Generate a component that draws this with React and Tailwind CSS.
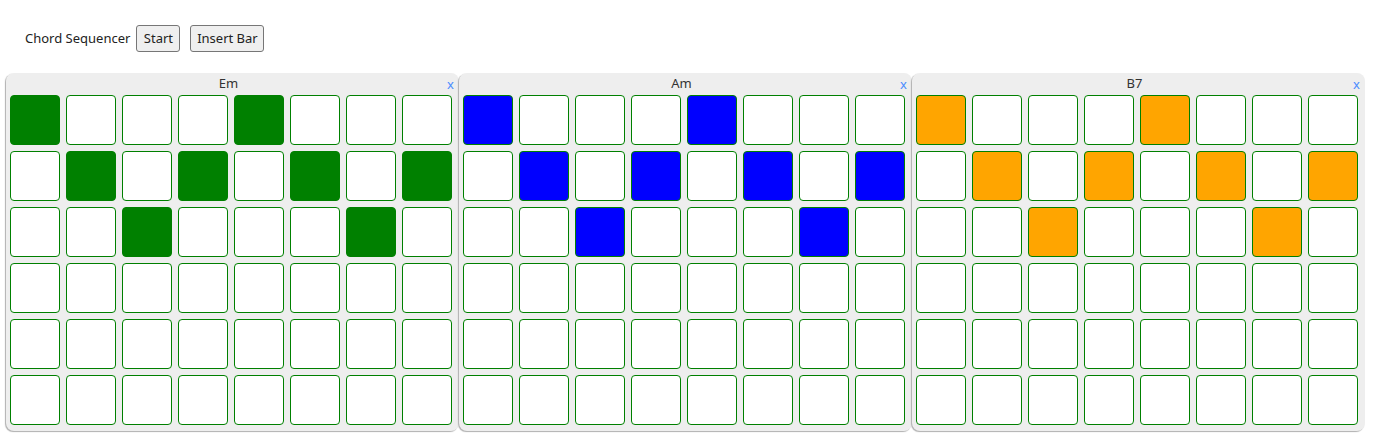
import React from "react";

const pattern = [
  [0, 4],
  [1, 3, 5, 7],
  [2, 6],
  [],
  [],
  [],
];

const bars = [
  { name: "Em", fill: "bg-[#008000]" },
  { name: "Am", fill: "bg-[#0000ff]" },
  { name: "B7", fill: "bg-[#ffa500]" },
];

function Panel({ name, fill }) {
  return (
    <div className="relative w-[453px] shrink-0 rounded-[8px] bg-[#eeeeee] shadow-[-1px_1px_1px_#b0b0b0] pl-[4px] pr-[6px] pb-[6px]">
      <div className="h-[22px] flex items-center justify-center text-[13px] text-[#333] pr-[6px]">
        {name}
      </div>
      <span className="absolute right-[5px] top-[4px] text-[13px] leading-[14px] text-[#4a8cff]">x</span>
      <div className="flex flex-col gap-[6px]">
        {pattern.map((row, r) => (
          <div key={r} className="flex gap-[6px]">
            {Array.from({ length: 8 }).map((_, c) => (
              <div
                key={c}
                className={
                  "w-[50px] h-[50px] rounded-[4px] border border-[#008000] " +
                  (row.includes(c) ? fill : "bg-white")
                }
              />
            ))}
          </div>
        ))}
      </div>
    </div>
  );
}

export default function App() {
  return (
    <div className="w-[1376px] h-[442px] bg-white font-['Segoe_UI','Noto_Sans',sans-serif] text-[#222]">
      <div className="flex items-center pt-[25px] pl-[25px] text-[13px]">
        <span>Chord Sequencer</span>
        <button className="ml-[6px] h-[27px] w-[44px] bg-[#efefef] border border-[#767676] rounded-[3px] text-[13px]">
          Start
        </button>
        <button className="ml-[10px] h-[27px] w-[74px] bg-[#efefef] border border-[#767676] rounded-[3px] text-[13px]">
          Insert Bar
        </button>
      </div>
      <div className="flex pl-[6px] mt-[21px]">
        {bars.map((b) => (
          <Panel key={b.name} {...b} />
        ))}
      </div>
    </div>
  );
}
